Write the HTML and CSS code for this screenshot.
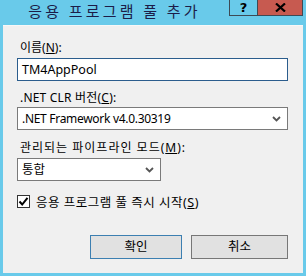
FILE: index.html
```html
<!DOCTYPE html>
<html>
<head>
    <title>응용 프로그램 풀 추가</title>
    <link rel="stylesheet" href="styles.css">
</head>
<body>
    <div class="window">
        <div class="titlebar">
            <div class="title">응용 프로그램 풀 추가</div>
            <div class="caption-btn help">?</div>
            <div class="caption-btn close">
                <svg width="11" height="9" viewBox="0 0 11 9"><path d="M1 0.5 L10 8.5 M10 0.5 L1 8.5" stroke="#000" stroke-width="2.2"/></svg>
            </div>
        </div>
        <div class="content">
            <div class="label">이름(<u>N</u>):</div>
            <div class="textbox">TM4AppPool</div>

            <div class="label label-clr">.NET CLR 버전(<u>C</u>):</div>
            <div class="combo">
                <span class="combo-text">.NET Framework v4.0.30319</span>
                <svg class="arrow" width="9" height="6" viewBox="0 0 9 6"><path d="M1 1 L4.5 4.5 L8 1" fill="none" stroke="#555" stroke-width="1.8"/></svg>
            </div>

            <div class="label label-mode">관리되는 파이프라인 모드(<u>M</u>):</div>
            <div class="combo combo-small">
                <span>통합</span>
                <svg class="arrow" width="9" height="6" viewBox="0 0 9 6"><path d="M1 1 L4.5 4.5 L8 1" fill="none" stroke="#555" stroke-width="1.8"/></svg>
            </div>

            <div class="check-row">
                <div class="checkbox">
                    <svg width="11" height="11" viewBox="0 0 11 11"><path d="M1.5 5.5 L4.2 8.5 L9.5 1.8" fill="none" stroke="#000" stroke-width="2"/></svg>
                </div>
                <span class="check-label">응용 프로그램 풀 즉시 시작(<u>S</u>)</span>
            </div>

            <div class="buttons">
                <div class="button default">확인</div>
                <div class="button cancel">취소</div>
            </div>
        </div>
    </div>
</body>
</html>
```

FILE: styles.css
```css
body {
    margin: 0;
    background: #69caea;
    font-family: "Noto Sans", "Noto Sans CJK KR", sans-serif;
    font-size: 12px;
    color: #000;
}
.window {
    width: 306px;
    height: 276px;
}
.titlebar {
    display: flex;
    align-items: flex-start;
    height: 25px;
    padding-right: 3px;
}
.title {
    flex: 1;
    text-align: center;
    font-family: "Noto Sans CJK KR", sans-serif;
    font-size: 15px;
    letter-spacing: 3.2px;
    line-height: 22px;
    color: #1c1c48;
}
.caption-btn {
    height: 15px;
    border: 1px solid #3d4a55;
    border-top: none;
    display: flex;
    align-items: center;
    justify-content: center;
}
.help {
    width: 27px;
    border-right: none;
    font-family: "DejaVu Sans", sans-serif;
    font-weight: bold;
    font-size: 13px;
    line-height: 15px;
}
.close {
    width: 44px;
    background: #c75a50;
}
.content {
    margin: 0 3px;
    height: 248px;
    background: #f0f0f0;
    border-top: 1px solid #f7f7f7;
    box-sizing: border-box;
    padding: 14px 15px 0 14px;
    display: flex;
    flex-direction: column;
}
.label {
    line-height: 16px;
    padding-left: 3px;
    margin-bottom: 2px;
}
.label-clr {
    margin-top: 9px;
    margin-bottom: 1px;
    letter-spacing: 0.2px;
}
.label-mode {
    margin-top: 10px;
    margin-bottom: 2px;
    letter-spacing: 1px;
}
.textbox, .combo {
    height: 23px;
    box-sizing: border-box;
    background: #fff;
    border: 1px solid #7a7a7a;
    padding: 0 4px;
    font-size: 12.5px;
    line-height: 21px;
}
.textbox {
    border-color: #2b5d8d;
}
.combo {
    display: flex;
    align-items: center;
    justify-content: space-between;
    padding-right: 6px;
}
.combo-text {
    font-size: 12px;
    letter-spacing: -0.3px;
}
.combo-small {
    width: 144px;
}
.check-row {
    display: flex;
    align-items: center;
    gap: 6px;
    margin-top: 11px;
    font-size: 12.5px;
}
.check-label {
    letter-spacing: 0.5px;
}
.checkbox {
    width: 13px;
    height: 13px;
    box-sizing: border-box;
    border: 1px solid #333;
    background: #fff;
    display: flex;
    align-items: center;
    justify-content: center;
}
.buttons {
    display: flex;
    gap: 9px;
    margin-top: 24px;
    padding-left: 73px;
}
.button {
    height: 24px;
    box-sizing: border-box;
    background: #e1e1e1;
    border: 1px solid #adadad;
    text-align: center;
    line-height: 21px;
    font-size: 12.5px;
}
.default {
    width: 92px;
    border-color: #3c7fb1;
}
.cancel {
    width: 97px;
    border-color: #777;
}
```
